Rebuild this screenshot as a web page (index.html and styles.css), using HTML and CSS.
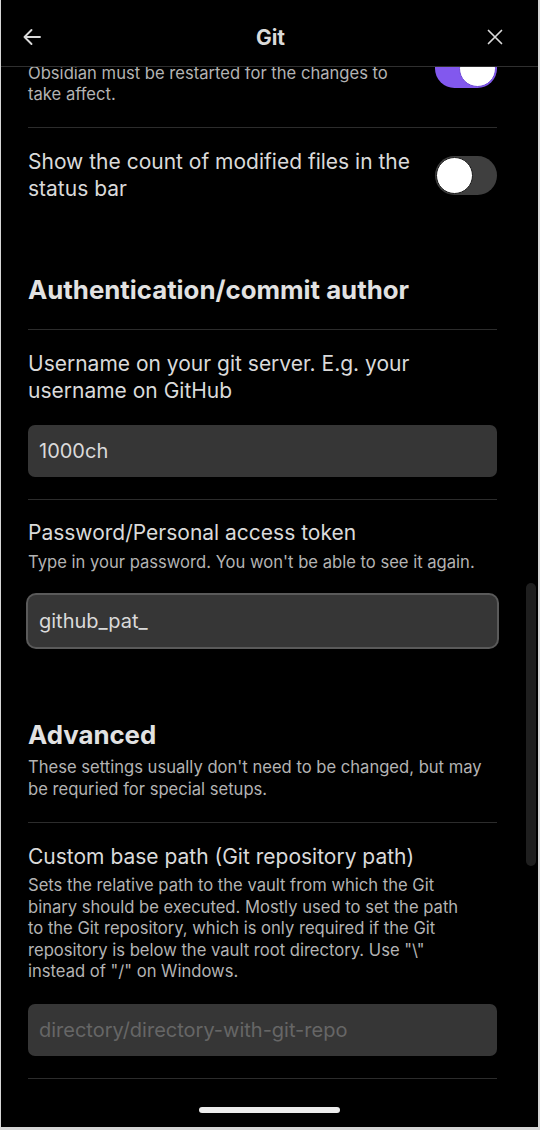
FILE: index.html
```html
<!DOCTYPE html>
<html lang="en">
<head>
<meta charset="utf-8">
<title>Git settings</title>
<link rel="stylesheet" href="styles.css">
</head>
<body>
<div class="screen">
  <header class="topbar">
    <button class="icon-btn back" aria-label="Back">
      <svg width="20" height="20" viewBox="0 0 20 20" fill="none" stroke="#dadada" stroke-width="1.9" stroke-linecap="round" stroke-linejoin="round"><path d="M18 10H2.5M9.5 3 2.5 10l7 7"/></svg>
    </button>
    <div class="title">Git</div>
    <button class="icon-btn close" aria-label="Close">
      <svg width="16" height="16" viewBox="0 0 16 16" fill="none" stroke="#dadada" stroke-width="1.7" stroke-linecap="round"><path d="M1.5 1.5l13 13M14.5 1.5l-13 13"/></svg>
    </button>
  </header>
  <div class="viewport">
    <div class="content">
      <div class="item row partial">
        <div class="info">
          <div class="desc">Obsidian must be restarted for the changes to take affect.</div>
        </div>
        <div class="toggle on"><span class="knob"></span></div>
      </div>
      <div class="item row">
        <div class="info">
          <div class="name">Show the count of modified files in the status bar</div>
        </div>
        <div class="toggle"><span class="knob"></span></div>
      </div>
      <div class="heading">
        <div class="heading-title">Authentication/commit author</div>
      </div>
      <div class="item">
        <div class="info">
          <div class="name">Username on your git server. E.g. your username on GitHub</div>
        </div>
        <div class="input">1000ch</div>
      </div>
      <div class="item">
        <div class="info">
          <div class="name">Password/Personal access token</div>
          <div class="desc">Type in your password. You won't be able to see it again.</div>
        </div>
        <div class="input focused">github_pat_</div>
      </div>
      <div class="heading">
        <div class="heading-title">Advanced</div>
        <div class="desc heading-desc">These settings usually don't need to be changed, but may be requried for special setups.</div>
      </div>
      <div class="item">
        <div class="info">
          <div class="name">Custom base path (Git repository path)</div>
          <div class="desc">Sets the relative path to the vault from which the Git binary should be executed. Mostly used to set the path to the Git repository, which is only required if the Git repository is below the vault root directory. Use "\" instead of "/" on Windows.</div>
        </div>
        <div class="input placeholder">directory/directory-with-git-repo</div>
      </div>
      <div class="item"></div>
    </div>
    <div class="scrollbar"></div>
  </div>
  <div class="safe-area">
    <div class="home-indicator"></div>
  </div>
</div>
</body>
</html>
```

FILE: styles.css
```css
html, body {
  margin: 0;
  padding: 0;
}
body {
  background: #d6d6d6;
  width: 540px;
  height: 1130px;
  font-family: Inter, "Noto Sans", sans-serif;
  color: #dadada;
}
.screen {
  position: relative;
  width: 537px;
  height: 1127px;
  margin-left: 1px;
  background: #000;
  overflow: hidden;
  display: flex;
  flex-direction: column;
}
.topbar {
  height: 58px;
  padding: 8px 33px 0 21px;
  border-bottom: 1px solid #2f2f2f;
  display: flex;
  align-items: center;
  justify-content: space-between;
  flex-shrink: 0;
}
.icon-btn {
  background: none;
  border: 0;
  padding: 0;
  width: 20px;
  height: 20px;
  display: flex;
  align-items: center;
  justify-content: center;
}
.title {
  font-size: 21px;
  font-weight: 700;
  color: #dadada;
  margin-left: 14px;
}
.viewport {
  position: relative;
  flex: 1;
  overflow: hidden;
}
.content {
  margin-top: -25px;
  padding: 0 41px 0 27px;
}
.item {
  border-top: 1px solid #2c2c2c;
  padding: 19.5px 0 21.5px;
  display: flex;
  flex-direction: column;
  gap: 21.5px;
}
.item.row {
  flex-direction: row;
  align-items: center;
  justify-content: space-between;
  gap: 24px;
}
.item.row.partial {
  align-items: flex-start;
}
.item.row.partial .toggle {
  margin-top: -14px;
}
.info {
  display: flex;
  flex-direction: column;
  gap: 5.5px;
  padding-right: 20px;
}
.item.row .info {
  padding-right: 0;
}
.name {
  font-size: 21px;
  line-height: 27px;
  color: #dadada;
}
.desc {
  font-size: 16.6px;
  line-height: 21.5px;
  color: #b3b3b3;
}
.heading {
  padding: 50px 0 22px;
}
.heading-title {
  font-size: 25.8px;
  line-height: 34px;
  font-weight: 700;
  color: #e2e2e2;
}
.heading-desc {
  margin-top: 5px;
}
.toggle {
  flex-shrink: 0;
  width: 62px;
  height: 39px;
  border-radius: 20px;
  background: #3f3f3f;
  position: relative;
  margin-top: 2px;
}
.toggle .knob {
  position: absolute;
  left: 1px;
  top: 1px;
  width: 35px;
  height: 35px;
  border-radius: 50%;
  background: #fff;
  border: 1px solid #1a1a1a;
}
.toggle.on {
  background: #8258ee;
}
.toggle.on .knob {
  left: auto;
  right: 1px;
  border-color: #6e48d8;
}
.input {
  height: 52px;
  box-sizing: border-box;
  background: #363636;
  border-radius: 7px;
  padding: 0 11px;
  display: flex;
  align-items: center;
  font-size: 20px;
  color: #dadada;
}
.input.focused {
  box-shadow: 0 0 0 2px #5a5a5a;
  border-radius: 8px;
}
.input.placeholder {
  color: #666;
}
.scrollbar {
  position: absolute;
  left: 525px;
  top: 516px;
  width: 10px;
  height: 283px;
  border-radius: 5px;
  background: #1f1f1f;
}
.safe-area {
  height: 40px;
  flex-shrink: 0;
  display: flex;
  justify-content: center;
  padding-top: 20px;
  box-sizing: border-box;
}
.home-indicator {
  width: 141px;
  height: 6px;
  border-radius: 3px;
  background: #ececec;
}
```
